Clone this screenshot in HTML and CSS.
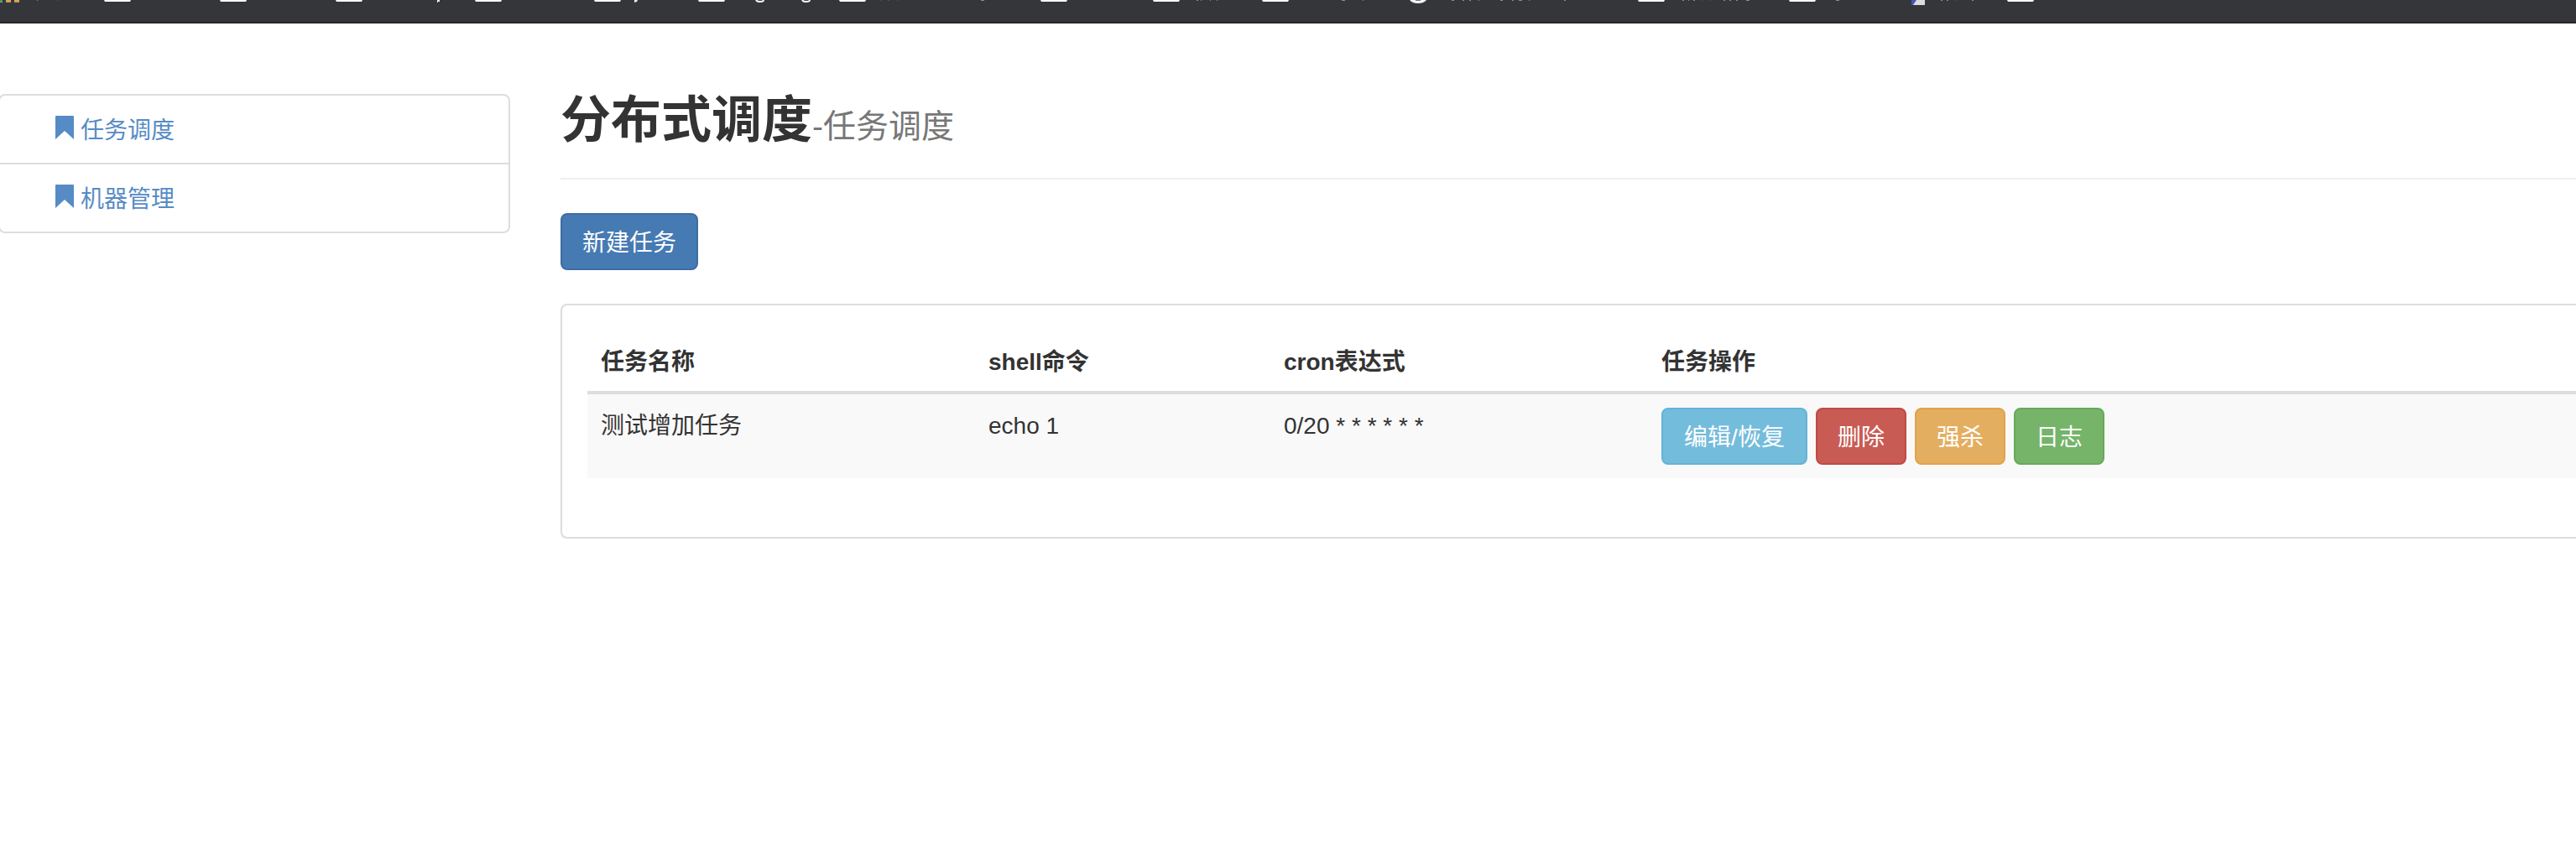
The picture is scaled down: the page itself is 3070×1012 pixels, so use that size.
FILE: index.html
```html
<!DOCTYPE html>
<html lang="zh-CN">
<head>
<meta charset="utf-8">
<title>分布式调度</title>
<link rel="stylesheet" href="styles.css">
</head>
<body>
<div class="topbar">
  <svg class="topbar-marks" width="2440" height="6" viewBox="0 0 2440 6" aria-hidden="true">
    <path fill="#3f9a58" d="M0 0h3v2H0z"/>
    <path fill="#e8a33d" d="M7 0h6v2H7zM17 0h6v2h-6z"/>
    <path fill="#9a9a96" d="M0 2h3v1H0zM7 2h6v1H7zM17 2h6v1h-6z"/>
    <path fill="#fff" d="M124 0h32l-1 2h-30zM262 0h32l-1 2h-30zM400 0h32l-1 2h-30zM566 0h32l-1 2h-30zM708 0h32l-1 2h-30zM832 0h32l-1 2h-30zM1000 0h32l-1 2h-30zM1240 0h32l-1 2h-30zM1374 0h32l-1 2h-30zM1504 0h32l-1 2h-30zM1952 0h32l-1 2h-30zM2132 0h32l-1 2h-30zM2392 0h32l-1 2h-30z"/>
    <path fill="#e8eaed" d="M521 0h3v2h-2v1h-1zM756 0h4l-1 2-3 1z"/>
    <path fill="none" stroke="#f1f3f4" stroke-width="2" d="M901 0q1 2 5 2t4-2M956 0q1 2 5 2t4-2"/>
    <path fill="#f1f3f4" d="M1680 0h20q-3 4-10 4t-10-4z"/>
    <path fill="#77787c" d="M1687 0h6v1h-6z"/>
    <path fill="#8b8c90" d="M44 0h1v1h-1zM1169 0h4v1h-4zM1426 0h2v1h-2zM1431 0h1v1h-1zM1442 0h1v1h-1zM1450 0h1v1h-1zM1599 0h4v1h-4zM1624 0h1v1h-1zM1730 0h3v1h-3zM1743 0h2v1h-2zM1751 0h2v1h-2zM1762 0h1v1h-1zM1788 0h3v1h-3zM1802 0h2v1h-2zM1810 0h4v1h-4zM1822 0h1v1h-1zM1864 0h2v1h-2zM2005 0h2v1h-2zM2012 0h1v1h-1zM2018 0h2v1h-2zM2054 0h2v1h-2zM2061 0h2v1h-2zM2069 0h2v1h-2zM2081 0h4v1h-4zM2188 0h4v1h-4zM2313 0h2v1h-2zM2320 0h2v1h-2zM2350 0h2v1h-2z"/>
    <path fill="#55565a" d="M68 0h1v1h-1zM1049 0h1v1h-1zM1058 0h2v1h-2zM1069 0h1v1h-1zM2028 0h1v1h-1zM2038 0h1v1h-1zM2330 0h1v1h-1z"/>
    <path fill="#dcdcdc" d="M2278 0h16v6h-16z"/>
    <path fill="#4257b5" d="M2278 0h6l-4 6h-2z"/>
  </svg>
</div>
<div class="layout">
  <nav class="sidebar">
    <ul class="menu">
      <li><a href="#jobs"><svg width="22" height="36" viewBox="0 0 22 36" aria-hidden="true"><path d="M1 0h20q1 0 1 1v27L11 18 0 28V1q0-1 1-1z"/></svg>任务调度</a></li>
      <li><a href="#workers"><svg width="22" height="36" viewBox="0 0 22 36" aria-hidden="true"><path d="M1 0h20q1 0 1 1v27L11 18 0 28V1q0-1 1-1z"/></svg>机器管理</a></li>
    </ul>
  </nav>
  <main class="content">
    <h1 class="page-header">分布式调度<small>-任务调度</small></h1>
    <button type="button" class="btn btn-primary">新建任务</button>
    <section class="panel">
      <table class="jobs">
        <colgroup><col class="col-name"><col class="col-command"><col class="col-cron"><col></colgroup>
        <thead>
          <tr><th>任务名称</th><th>shell命令</th><th>cron表达式</th><th>任务操作</th></tr>
        </thead>
        <tbody>
          <tr>
            <td>测试增加任务</td>
            <td>echo 1</td>
            <td>0/20 * * * * * *</td>
            <td class="actions">
              <div class="toolbar">
                <button type="button" class="btn btn-info">编辑/恢复</button>
                <button type="button" class="btn btn-danger">删除</button>
                <button type="button" class="btn btn-warning">强杀</button>
                <button type="button" class="btn btn-success">日志</button>
              </div>
            </td>
          </tr>
        </tbody>
      </table>
    </section>
  </main>
</div>
</body>
</html>
```
FILE: styles.css
```css
* {
  box-sizing: border-box;
}

body {
  margin: 0;
  overflow-x: hidden;
  background: #fff;
  color: #333;
  font-family: "Liberation Sans", "Noto Sans CJK SC", sans-serif;
  font-size: 28px;
  line-height: 40px;
}

.topbar {
  height: 28px;
  overflow: hidden;
  background: #35363a;
  border-bottom: 2px solid #262629;
}

.topbar-marks {
  display: block;
}

.layout {
  display: flex;
  align-items: flex-start;
  gap: 60px;
  padding-top: 84px;
}

/* The list's left edge runs just off the window. */
.sidebar {
  flex: 0 0 608px;
}

.menu {
  margin: 0 0 0 -2px;
  padding: 0;
  list-style: none;
  border: 2px solid #ddd;
  border-radius: 8px;
}

.menu li + li {
  border-top: 2px solid #ddd;
}

.menu a {
  display: flex;
  align-items: center;
  gap: 8px;
  padding: 22px 66px 18px;
  color: #568bc5;
  text-decoration: none;
}

.menu svg {
  fill: currentColor;
}

.content {
  flex: 1;
  min-width: 0;
}

.page-header {
  margin: 0 0 40px;
  padding: 2px 0 38px;
  border-bottom: 2px solid #eee;
  font-size: 60px;
  font-weight: 700;
  line-height: 60px;
}

.page-header small {
  color: #777;
  font-size: 39px;
  font-weight: 400;
  line-height: 39px;
}

.btn {
  padding: 14px 24px 10px;
  border: 2px solid;
  border-radius: 8px;
  color: #fff;
  font: inherit;
  white-space: nowrap;
  cursor: pointer;
}

.btn-primary { background: #467ab3; border-color: #3e6da2; }
.btn-info { min-width: 174px; background: #74bcdb; border-color: #65b3d6; }
.btn-danger { background: #c95b55; border-color: #c14a43; }
.btn-warning { background: #e4ae60; border-color: #e2a24b; }
.btn-success { background: #75b469; border-color: #66aa59; }

.panel {
  margin-top: 40px;
  padding: 30px 0 70px 30px;
  border: 2px solid #ddd;
  border-right: 0;
  border-radius: 8px 0 0 8px;
  box-shadow: 0 2px 2px rgba(0, 0, 0, 0.05);
}

.jobs {
  width: 100%;
  table-layout: fixed;
  border-spacing: 0;
}

.col-name { width: 462px; }
.col-command { width: 352px; }
.col-cron { width: 450px; }

.jobs th,
.jobs td {
  padding: 18px 16px 14px;
  text-align: left;
  vertical-align: top;
}

.jobs th {
  border-bottom: 4px solid #ddd;
}

.jobs td {
  background: #f9f9f9;
}

.jobs .actions {
  padding: 16px;
}

.toolbar {
  display: flex;
  gap: 10px;
}
```
